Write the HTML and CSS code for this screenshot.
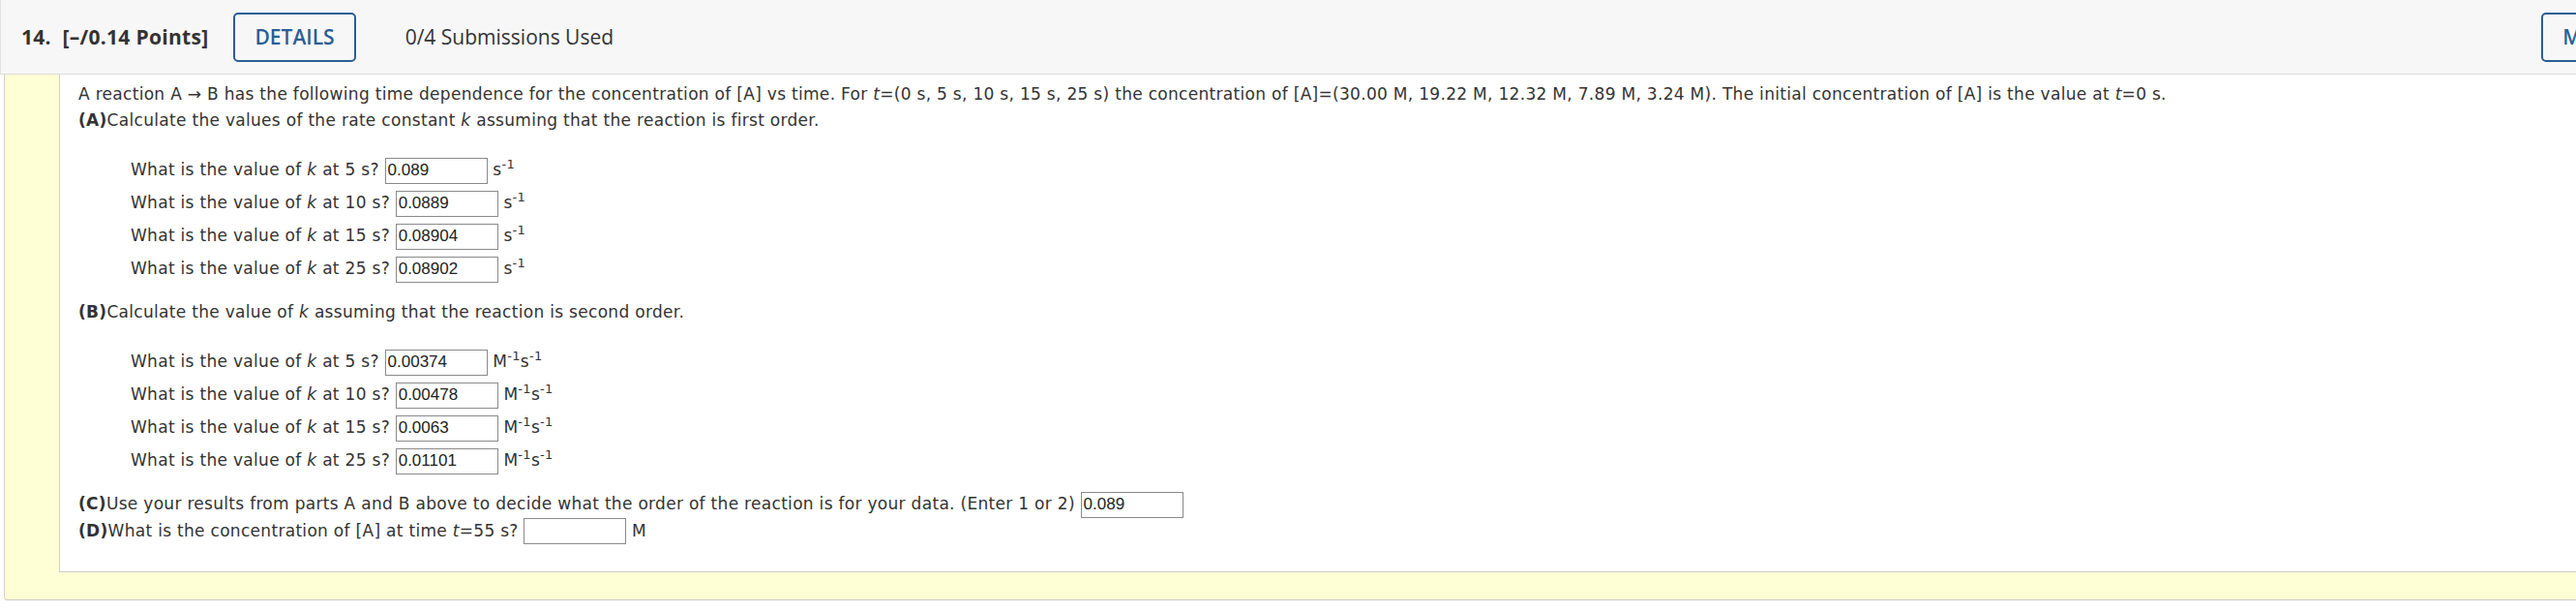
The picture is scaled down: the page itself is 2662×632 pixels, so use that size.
FILE: index.html
```
<!DOCTYPE html>
<html>
<head lang="en">
    <meta charset="UTF-8">
    <title>Question 14</title>
    <link rel="stylesheet" href="styles.css">
</head>
<body>
<div class="question">
    <div class="q_header">
        <span class="q_title">14.&nbsp; [&ndash;/0.14 Points]</span>
        <button class="btn">DETAILS</button>
        <span class="q_subs">0/4 Submissions Used</span>
        <button class="btn btn_right">MY NOTES</button>
    </div>
    <div class="q_body">
        <div class="q_content">
            <p class="line">A reaction A &rarr; B has the following time dependence for the concentration of [A] vs time. For <i>t</i>=(0 s, 5 s, 10 s, 15 s, 25 s) the concentration of [A]=(30.00 M, 19.22 M, 12.32 M, 7.89 M, 3.24 M). The initial concentration of [A] is the value at <i>t</i>=0 s.</p>
            <p class="line"><b>(A)</b>Calculate the values of the rate constant <i>k</i> assuming that the reaction is first order.</p>

            <div class="q_list">
                <div class="q_row">What is the value of <i>k</i> at 5 s? <input class="answer" value="0.089"> s<sup>-1</sup></div>
                <div class="q_row">What is the value of <i>k</i> at 10 s? <input class="answer" value="0.0889"> s<sup>-1</sup></div>
                <div class="q_row">What is the value of <i>k</i> at 15 s? <input class="answer" value="0.08904"> s<sup>-1</sup></div>
                <div class="q_row">What is the value of <i>k</i> at 25 s? <input class="answer" value="0.08902"> s<sup>-1</sup></div>
            </div>

            <p class="line"><b>(B)</b>Calculate the value of <i>k</i> assuming that the reaction is second order.</p>

            <div class="q_list">
                <div class="q_row">What is the value of <i>k</i> at 5 s? <input class="answer" value="0.00374"> M<sup>-1</sup>s<sup>-1</sup></div>
                <div class="q_row">What is the value of <i>k</i> at 10 s? <input class="answer" value="0.00478"> M<sup>-1</sup>s<sup>-1</sup></div>
                <div class="q_row">What is the value of <i>k</i> at 15 s? <input class="answer" value="0.0063"> M<sup>-1</sup>s<sup>-1</sup></div>
                <div class="q_row">What is the value of <i>k</i> at 25 s? <input class="answer" value="0.01101"> M<sup>-1</sup>s<sup>-1</sup></div>
            </div>

            <p class="line"><b>(C)</b>Use your results from parts A and B above to decide what the order of the reaction is for your data. (Enter 1 or 2) <input class="answer" value="0.089"></p>
            <p class="line"><b>(D)</b>What is the concentration of [A] at time <i>t</i>=55 s? <input class="answer" value=""> M</p>
        </div>
    </div>
</div>
</body>
</html>
```

FILE: styles.css
```
html, body {
    margin: 0;
    overflow: hidden;
    background: #fff;
}
.question {
    width: 2797px;
}

/* header bar */
.q_header {
    display: flex;
    align-items: center;
    height: 76px;
    padding: 0 21px;
    background: #f7f7f7;
    border-bottom: 1px solid #dcdcdc;
    border-left: 1px solid #e2e2e2;
    font-family: "Open Sans", "Liberation Sans", sans-serif;
    font-size: 21px;
    color: #333;
}
.q_title {
    font-weight: 700;
    letter-spacing: 0.3px;
}
.btn {
    margin-left: 26px;
    height: 51px;
    padding: 0 20px;
    border: 2px solid #2b5e96;
    border-radius: 5px;
    background: transparent;
    color: #2b5e96;
    font-family: "Open Sans", "Liberation Sans", sans-serif;
    font-size: 21px;
    font-weight: 600;
}
.q_subs {
    margin-left: 51px;
}
.btn_right {
    width: 150px;
    margin-left: auto;
}

/* question body */
.q_body {
    margin-left: 4px;
    padding: 0 0 28px 56px;
    background: #ffffd5;
    border-left: 1px solid #d0d0d0;
    border-bottom: 1px solid #c8c8c8;
    border-bottom-left-radius: 4px;
}
.q_content {
    padding: 7px 0 28px 19px;
    background: #fff;
    border-left: 1px solid #cfcfcf;
    border-bottom: 1px solid #cfcfcf;
    font-family: "DejaVu Sans", Verdana, sans-serif;
    font-size: 17px;
    letter-spacing: 0.3px;
    color: #333;
}
.line {
    margin: 0;
    line-height: 27px;
}
.q_list {
    margin: 20px 0 15px 54px;
}
.q_row {
    height: 34px;
    line-height: 34px;
}
sup {
    font-size: 13px;
    line-height: 0;
}
.answer {
    box-sizing: border-box;
    width: 106px;
    height: 27px;
    margin: 0;
    padding: 1px 2px;
    border: 1px solid #8a8a8a;
    font-family: "Liberation Sans", Arial, sans-serif;
    font-size: 17px;
    letter-spacing: 0;
    color: #222;
}
```
